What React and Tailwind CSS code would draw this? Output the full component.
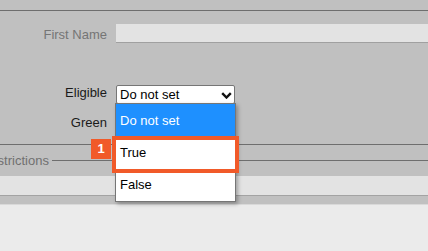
export default function App() {
  const orange = "bg-[#f15a29]";

  return (
    <div
      className="relative h-[251px] w-[428px] overflow-hidden bg-[#ebebeb] text-[13px]"
      style={{ fontFamily: "'Liberation Sans', Arial, sans-serif" }}
    >
      <div className="h-[204px] bg-[#c0c0c0]">
        <div className="h-[10px]" />
        <div className="h-px bg-[#6e6e6e]" />

        {/* first name */}
        <div className="mt-[13px] flex h-[19px] items-center gap-[9px]">
          <label className="w-[107px] pt-[3px] text-right text-[#757575]">First Name</label>
          <div className="h-[19px] flex-1 border-b border-[#a0a0a0] bg-[#e3e3e3]" />
        </div>

        {/* eligible */}
        <div className="mt-[42px] flex h-[19px] items-center gap-[9px]">
          <label className="w-[107px] pb-[3px] text-right text-[#1a1a1a]">Eligible</label>
          <div className="relative flex h-[19px] w-[119px] items-center rounded-[2px] border border-[#767676] bg-white pl-[3px] text-black">
            Do not set
            <svg
              className="absolute left-[104px] top-[6px]"
              width="11"
              height="7"
              viewBox="0 0 11 7"
            >
              <path d="M1.2 1.2 L5.5 5.5 L9.8 1.2" fill="none" stroke="#111" strokeWidth="2.4" />
            </svg>
          </div>
        </div>

        {/* green */}
        <div className="mt-[10px] flex h-[19px] items-center gap-[9px]">
          <label className="w-[107px] pb-[2px] text-right text-[#1a1a1a]">Green</label>
        </div>

        <div className="mt-[11px] h-px bg-[#6e6e6e]" />

        {/* restrictions fieldset, legend runs off the left edge */}
        <div className="mt-[7px] flex h-[17px] items-center">
          <span className="ml-[-19px] text-[#707070]">Restrictions</span>
          <div className="ml-[3px] h-px flex-1 bg-[#6e6e6e]" />
        </div>

        <div className="mt-[7px] h-[20px] border-b border-[#a3a3a3] bg-[#e3e3e3]" />
      </div>
      <div className="h-px bg-[#d9d9d9]" />

      {/* open select list */}
      <div className="absolute left-[115px] top-[103px] w-[121px] border border-[#767676] bg-white shadow-[2px_2px_4px_rgba(0,0,0,0.3)]">
        <div className="flex h-[33px] items-center bg-[#1e90ff] pl-[4px] text-white">Do not set</div>
        <div className="flex h-[32px] items-center pl-[4px] text-black">True</div>
        <div className="flex h-[32px] items-center pl-[4px] text-black">False</div>
      </div>

      {/* step highlight */}
      <div className="absolute left-[112px] top-[136px] h-[37px] w-[127px] border-4 border-[#f15a29]" />
      <div
        className={`absolute left-[91px] top-[139px] flex h-[20px] w-[20px] items-center justify-center ${orange} text-[13px] font-bold text-white`}
      >
        1
      </div>
    </div>
  );
}
